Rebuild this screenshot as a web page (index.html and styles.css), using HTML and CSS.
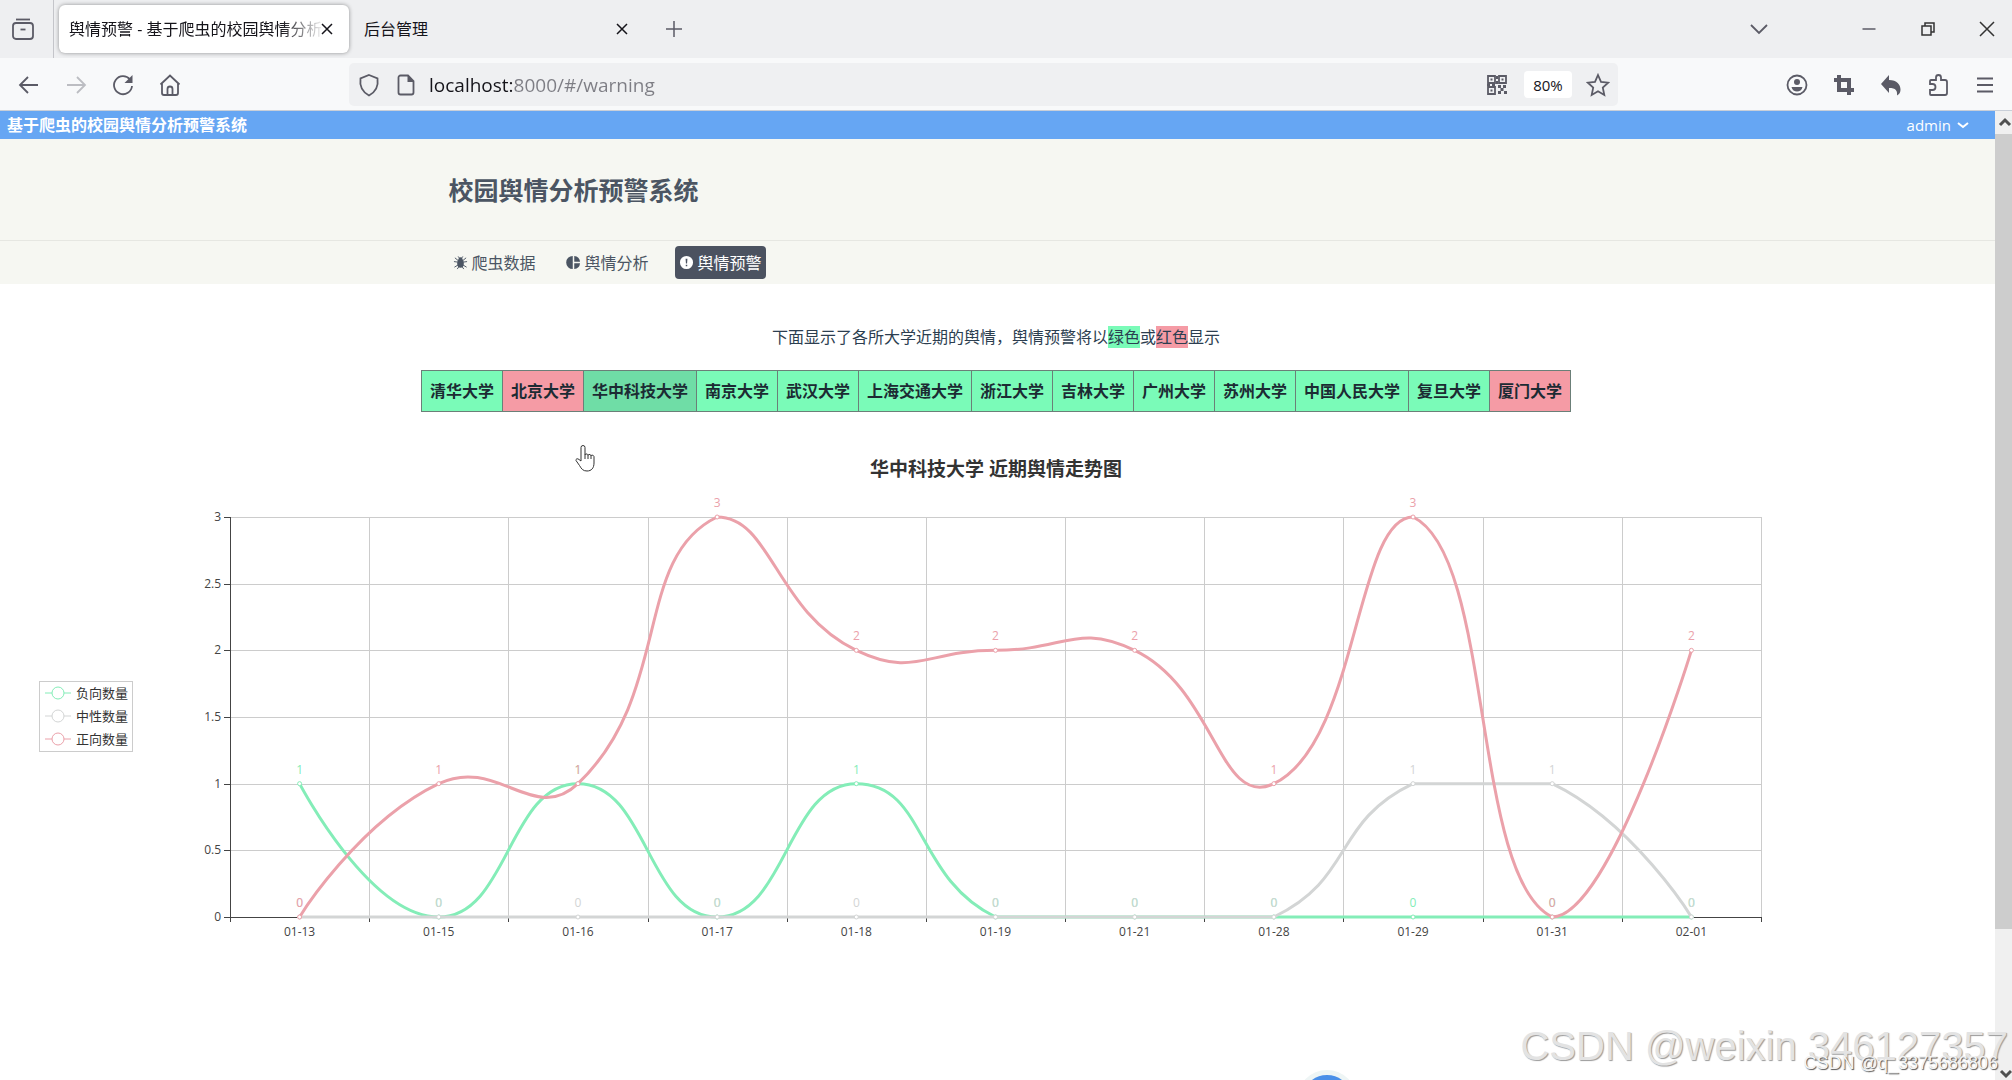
FILE: index.html
```html
<!DOCTYPE html>
<html lang="zh-CN">
<head>
    <meta charset="UTF-8">
    <meta name="viewport" content="width=device-width, initial-scale=1.0">
    <title>舆情预警 - 基于爬虫的校园舆情分析预警系统</title>
    <link rel="stylesheet" href="styles.css">
</head>
<body>
    <!-- Tab strip -->
    <div class="tabstrip">
        <button class="icon-btn history" aria-label="History">
            <svg viewBox="0 0 24 24"><path d="M5 2.500h14"/><rect x="2" y="6" width="20" height="16" rx="3"/><path d="M9.500 12.500h5"/></svg>
        </button>
        <div class="tab active">
            <a class="tab-title" href="#/warning">舆情预警 - 基于爬虫的校园舆情分析</a>
            <button class="close" aria-label="Close tab"><svg viewBox="0 0 12 12"><path d="M1 1l10 10M11 1L1 11"/></svg></button>
        </div>
        <div class="tab">
            <a class="tab-title" href="#/admin">后台管理</a>
            <button class="close" aria-label="Close tab"><svg viewBox="0 0 12 12"><path d="M1 1l10 10M11 1L1 11"/></svg></button>
        </div>
        <button class="icon-btn new-tab" aria-label="New tab"><svg viewBox="0 0 24 24"><path d="M12 4v16M4 12h16"/></svg></button>
        <div class="window-controls">
            <button class="icon-btn all-tabs" aria-label="All tabs"><svg viewBox="0 0 24 24"><path d="M4 8l8 8 8-8"/></svg></button>
            <button class="icon-btn" aria-label="Minimize"><svg viewBox="0 0 24 24"><path d="M5.500 12h13"/></svg></button>
            <button class="icon-btn dark" aria-label="Restore"><svg viewBox="0 0 24 24"><rect x="6" y="9" width="9" height="9"/><path d="M9 9V6h9v9h-3"/></svg></button>
            <button class="icon-btn dark" aria-label="Close"><svg viewBox="0 0 24 24"><path d="M5 5l14 14M19 5L5 19"/></svg></button>
        </div>
    </div>

    <!-- Toolbar -->
    <div class="toolbar">
        <button class="icon-btn" aria-label="Back"><svg viewBox="0 0 24 24"><path d="M21 12H3M11 4l-8 8 8 8"/></svg></button>
        <button class="icon-btn disabled" aria-label="Forward"><svg viewBox="0 0 24 24"><path d="M3 12h18M13 4l8 8-8 8"/></svg></button>
        <button class="icon-btn" aria-label="Reload"><svg viewBox="0 0 24 24"><path d="M19 6.500a9 9 0 1 0 2 6.500"/><path class="solid" d="M21.500 2v8h-8z"/></svg></button>
        <button class="icon-btn" aria-label="Home"><svg viewBox="0 0 24 24"><path d="M2.500 11.500L12 2.500l9.500 9M4 10v10a2 2 0 0 0 2 2h12a2 2 0 0 0 2-2V10M9.500 22v-6a2.500 2.500 0 0 1 5 0v6"/></svg></button>
        <div class="urlbar">
            <svg class="icon" viewBox="0 0 24 24"><path d="M12 2l8.500 3.500c1 7-2 13.500-8.500 17C5.500 19 2.500 12.500 3.500 5.500z"/></svg>
            <svg class="icon doc" viewBox="0 0 24 24"><path d="M14 2.500H6.500a2 2 0 0 0-2 2v15a2 2 0 0 0 2 2h11a2 2 0 0 0 2-2V8z"/><path class="solid" d="M13.500 2v7H20z"/></svg>
            <input class="url" type="text" aria-label="Address" value="localhost:8000/#/warning">
            <svg class="icon" viewBox="0 0 24 24"><path d="M3 3h7v7H3zM14 3h7v7h-7zM3 14h7v7H3z"/><path class="solid" d="M5.500 5.500h2v2h-2zM16.500 5.500h2v2h-2zM5.500 16.500h2v2h-2zM11 3h2v3h-2zM11 8h2v3h-2zM2 11h3v2H2zM7 11h3v2H7zM13 12h3v3h-3zM18 12h3v3h-3zM15.500 15h3v3h-3zM13 18h3v3h-3zM19 18h3v3h-3z"/></svg>
            <button class="zoom-level">80%</button>
            <button class="icon-btn" aria-label="Bookmark"><svg viewBox="0 0 24 24"><path d="M12 2l3 6.800 7.200.8-5.400 5 1.500 7.400L12 18.300 5.700 22l1.500-7.400-5.400-5 7.200-.8z"/></svg></button>
        </div>
        <button class="icon-btn" aria-label="Account"><svg viewBox="0 0 24 24"><circle cx="12" cy="12" r="9.500"/><circle class="solid" cx="12" cy="9" r="3"/><path class="solid" d="M6.500 14h11c-.5 3-3 4.500-5.500 4.500S7 17 6.500 14z"/></svg></button>
        <button class="icon-btn crop" aria-label="Screenshot"><svg viewBox="0 0 24 24"><path d="M7 2v15h15M2 7h15v15"/></svg></button>
        <button class="icon-btn" aria-label="Undo"><svg viewBox="0 0 24 24"><path class="solid" d="M10 2v5c8 0 11.500 5 11.500 9.500 0 2.500-.8 4.500-3.500 6 .5-5-1-7.500-8-7.500v5L2 11z"/></svg></button>
        <button class="icon-btn" aria-label="Extensions"><svg viewBox="0 0 24 24"><path d="M4 11V8a1 1 0 0 1 1-1h5V4.500a2.500 2.500 0 0 1 5 0V7h4a2 2 0 0 1 2 2v11a2 2 0 0 1-2 2H5a1 1 0 0 1-1-1v-4h2.500a2.500 2.500 0 0 0 0-6z"/></svg></button>
        <button class="icon-btn" aria-label="Menu"><svg viewBox="0 0 24 24"><path d="M4 5.500h16M4 12h16M4 18.500h16"/></svg></button>
    </div>

    <div class="viewport">
        <div class="page">
            <div class="topbar">
                <span class="brand">基于爬虫的校园舆情分析预警系统</span>
                <button class="user">admin <svg viewBox="0 0 12 12"><path d="M1 4l5 4 5-4"/></svg></button>
            </div>
            <header class="header">
                <div class="inner">
                    <h1>校园舆情分析预警系统</h1>
                </div>
                <nav class="nav">
                    <div class="inner">
                        <a href="#/spider">
                            <svg viewBox="0 0 16 16"><path class="leg" d="M8 8L1 7M8 8L2 3M8 8l6-5M8 8l7-1M8 9l-6.500 4M8 9l6.500 4M8 10l-3.500 5M8 10l3.500 5M5.500 1.500L8 5l2.500-3.500"/><ellipse cx="8" cy="9" rx="3.500" ry="4.500"/><circle cx="8" cy="4.500" r="2.200"/></svg>
                            爬虫数据
                        </a>
                        <a href="#/analysis">
                            <svg viewBox="0 0 16 16"><path d="M7.200 1v14A7 7 0 0 1 7.200 1zM8.800 1a7 7 0 0 1 6.200 6.200H8.800zM8.800 8.800H15A7 7 0 0 1 8.800 15z"/></svg>
                            舆情分析
                        </a>
                        <a class="current" href="#/warning">
                            <svg viewBox="0 0 16 16"><path fill-rule="evenodd" d="M8 1a7 7 0 1 0 0 14A7 7 0 0 0 8 1zM7 4h2l-.4 5H7.400zM7.200 10.500h1.600V12H7.200z"/></svg>
                            舆情预警
                        </a>
                    </div>
                </nav>
            </header>

            <main class="main">
                <p class="tip">下面显示了各所大学近期的舆情，舆情预警将以<span class="green">绿色</span>或<span class="red">红色</span>显示</p>
                <table class="schools">
                    <tr>
                        <th class="green">清华大学</th>
                        <th class="red">北京大学</th>
                        <th class="green selected">华中科技大学</th>
                        <th class="green">南京大学</th>
                        <th class="green">武汉大学</th>
                        <th class="green">上海交通大学</th>
                        <th class="green">浙江大学</th>
                        <th class="green">吉林大学</th>
                        <th class="green">广州大学</th>
                        <th class="green">苏州大学</th>
                        <th class="green">中国人民大学</th>
                        <th class="green">复旦大学</th>
                        <th class="red">厦门大学</th>
                    </tr>
                </table>
                <h2 class="chart-title">华中科技大学 近期舆情走势图</h2>
                <svg class="chart" id="chart"></svg>
            </main>
            <button class="float-btn" aria-label="Back to top"></button>
        </div>
        <div class="scrollbar">
            <svg viewBox="0 0 17 23"><path d="M5 14l5-5 5 5"/></svg>
            <div class="thumb"></div>
            <svg viewBox="0 0 17 23"><path d="M6 14l5 5 5-5"/></svg>
        </div>
    </div>

    <svg class="cursor" viewBox="0 0 20 28"><path d="M6 17V3.500a2 2 0 0 1 4 0V11c0-1.500 3-1.500 3 .5 0-1.500 3-1.500 3 .5 0-1.500 3-1 3 .8V19c0 5-2.500 8-7 8-4 0-5.500-2-7.500-5.500L1 16.500c-.5-1.500 1.500-2.500 3-1z"/><path d="M10 11v4M13 11.500V15M16 12v3"/></svg>
    <div class="mark mark-large">CSDN @weixin 346127357</div>
    <div class="mark mark-small">CSDN @q_3375686806</div>

    <script src="chart.js"></script>
</body>
</html>
```
FILE: styles.css
```css
* {
    box-sizing: border-box;
}
body {
    display: flex;
    flex-direction: column;
    height: 100vh;
    margin: 0;
    overflow: hidden;
    position: relative;
    font-family: "Open Sans", "Noto Sans CJK SC", sans-serif;
    font-size: 16px;
    line-height: 20px;
    color: #2c3e50;
    background-color: #fff;
}
button, input {
    font: inherit;
    color: inherit;
    border: none;
    background: none;
    padding: 0;
}
a {
    color: inherit;
    text-decoration: none;
}
svg {
    display: block;
    fill: none;
    stroke: currentColor;
}
.icon-btn, .icon {
    flex: none;
    width: 24px;
    height: 24px;
    color: #5b5b66;
    stroke-width: 1.8;
}
.icon-btn svg {
    width: 24px;
    height: 24px;
}
.solid {
    fill: currentColor;
    stroke: none;
}
.disabled {
    color: #bcbdc2;
}
.dark {
    color: #333;
}

/* tab strip */
.tabstrip {
    display: flex;
    align-items: center;
    height: 58px;
    flex: none;
    background-color: #eeeff1;
    color: #15141a;
}
.history {
    width: 54px;
    height: 58px;
    padding-left: 11px;
    border-right: 1px solid #c4c5ca;
}
.tab {
    display: flex;
    align-items: center;
    width: 290px;
    height: 48px;
    margin-left: 5px;
    padding: 0 14px 0 10px;
    border-radius: 6px;
}
.tab.active {
    background-color: #fff;
    box-shadow: 0 0 4px rgba(0, 0, 0, 0.4);
}
.tab-title {
    flex: 1;
    overflow: hidden;
    white-space: nowrap;
}
.active .tab-title {
    -webkit-mask-image: linear-gradient(to right, #000 212px, transparent 256px);
    mask-image: linear-gradient(to right, #000 212px, transparent 256px);
}
.close {
    width: 14px;
    height: 14px;
    stroke-width: 1.5;
}
.close svg {
    width: 12px;
    height: 12px;
}
.new-tab {
    margin-left: 18px;
    stroke-width: 1.5;
}
.window-controls {
    display: flex;
    gap: 35px;
    margin-left: auto;
    padding-right: 13px;
}
.window-controls .icon-btn {
    stroke-width: 1.5;
}
.window-controls .all-tabs {
    margin-right: 51px;
    stroke-width: 1.8;
}

/* toolbar */
.toolbar {
    display: flex;
    align-items: center;
    gap: 23px;
    height: 53px;
    flex: none;
    padding: 1px 15px 0 17px;
    background-color: #f8f9fa;
    border-bottom: 1px solid #c9cfd8;
}
.urlbar {
    display: flex;
    flex: 1;
    align-items: center;
    height: 43px;
    margin: 0 144px;
    padding: 0 8px;
    border-radius: 5px;
    background-color: #eff0f2;
}
.doc {
    margin: 0 11px 0 13px;
}
.url {
    flex: 1;
    min-width: 0;
    height: 32px;
    font-size: 19px;
    color: transparent;
    background-image: linear-gradient(to right, #15141a 84px, #7d7d84 84px);
    -webkit-background-clip: text;
    background-clip: text;
}
.zoom-level {
    width: 48px;
    height: 27px;
    margin: 0 14px 0 15px;
    border-radius: 4px;
    background-color: #fff;
    font-size: 15px;
    color: #15141a;
}
.crop {
    stroke-width: 4;
}

/* page */
.viewport {
    display: flex;
    flex: 1;
    min-height: 0;
}
.page {
    flex: 1;
    min-width: 0;
    overflow: hidden;
    position: relative;
}
.topbar {
    display: flex;
    align-items: center;
    justify-content: space-between;
    height: 28px;
    padding: 0 26px 0 7px;
    background-color: #66a6f3;
    color: #fff;
}
.brand {
    font-weight: bold;
}
.user {
    display: flex;
    align-items: center;
    gap: 6px;
    font-size: 15px;
}
.user svg {
    width: 12px;
    height: 12px;
    stroke-width: 2;
}
.header {
    background-color: #f6f7f2;
    color: #4b5563;
}
.inner {
    display: flex;
    max-width: 1098px;
    margin: 0 auto;
}
h1 {
    margin: 0;
    padding: 36px 0 35px;
    font-size: 25px;
    line-height: 30px;
}
.nav {
    border-top: 1px solid #e6e7e2;
    padding: 5px 0;
}
.nav .inner {
    gap: 22px;
}
.nav a {
    display: flex;
    align-items: center;
    gap: 4px;
    height: 33px;
    padding: 0 4px;
    border-radius: 4px;
}
.nav svg {
    width: 15px;
    height: 15px;
    fill: currentColor;
    stroke: none;
}
.nav .leg {
    fill: none;
    stroke: currentColor;
}
.nav .current {
    background-color: #4b5260;
    color: #fff;
}
.main {
    display: flex;
    flex-direction: column;
    align-items: center;
    padding: 43px 3px 0 0;
}
.tip {
    margin: 0;
}
.green {
    background-color: #7afbb8;
}
.red {
    background-color: #f59ba5;
}
.schools {
    margin-top: 23px;
    border-collapse: collapse;
    color: #1c2b33;
}
.schools th {
    height: 41px;
    padding: 0 8px;
    border: 1px solid #6b7f78;
    white-space: nowrap;
    cursor: pointer;
}
.schools .selected {
    background-color: #6fdda6;
}
.chart-title {
    margin: 44px 0 0;
    font-size: 19px;
    line-height: 26px;
    color: #333;
}
.chart {
    width: 100%;
    height: 480px;
    font-size: 12px;
    stroke: none;
}
.float-btn {
    position: absolute;
    left: 65%;
    bottom: -50px;
    width: 60px;
    height: 60px;
    border: 5px solid #eef5f5;
    border-radius: 50%;
    background-color: #4a8fe8;
}

/* chart parts */
.grid-line {
    stroke: #ccc;
}
.axis {
    stroke: #444;
}
.axis-label {
    fill: #444;
}
.series {
    fill: none;
    stroke-width: 3;
}
.dot {
    fill: #fff;
    stroke-width: 1;
}
.legend-box {
    fill: #fff;
    stroke: #ccc;
}
.legend-mark {
    fill: #fff;
    stroke-width: 1;
}
.legend-text {
    fill: #333;
    font-size: 13px;
}

/* scrollbar */
.scrollbar {
    display: flex;
    flex-direction: column;
    width: 17px;
    background-color: #f0f0f0;
    color: #505050;
    stroke-width: 3;
}
.scrollbar svg {
    height: 23px;
}
.thumb {
    height: 795px;
    background-color: #cdcdcd;
    margin-bottom: auto;
}

/* floating over everything */
.cursor {
    position: absolute;
    left: 575px;
    top: 444px;
    width: 20px;
    height: 28px;
    fill: #fff;
    stroke: #333;
}
.mark {
    position: absolute;
    font-family: "Liberation Sans", sans-serif;
    white-space: nowrap;
    pointer-events: none;
}
.mark-large {
    right: 4px;
    bottom: 12px;
    font-size: 40px;
    line-height: 44px;
    color: #e3e3e3;
    text-shadow: 1px 1px 1px #999;
}
.mark-small {
    right: 14px;
    bottom: 7px;
    font-size: 18px;
    line-height: 20px;
    color: #f4f4f4;
    text-shadow: 1px 1px 1px #555;
}
```
FILE: chart.js
```js
const days = ['01-13', '01-15', '01-16', '01-17', '01-18', '01-19', '01-21', '01-28', '01-29', '01-31', '02-01'];
const series = [
    { name: '负向数量', color: '#84edb8', data: [1, 0, 1, 0, 1, 0, 0, 0, 0, 0, 0] },
    { name: '中性数量', color: '#d3d5d5', data: [0, 0, 0, 0, 0, 0, 0, 0, 1, 1, 0] },
    { name: '正向数量', color: '#eba1aa', data: [0, 1, 1, 3, 2, 2, 2, 1, 3, 0, 2] }
];

const chart = document.getElementById('chart');
const grid = { left: 230, right: 231, top: 35, height: 400 };
const maxValue = 3;

function add(tag, attrs, text) {
    const el = document.createElementNS('http://www.w3.org/2000/svg', tag);
    for (const key in attrs) {
        el.setAttribute(key, attrs[key]);
    }
    if (text !== undefined) {
        el.textContent = text;
    }
    chart.appendChild(el);
}

function line(x1, y1, x2, y2, cls) {
    add('line', { x1, y1, x2, y2, class: cls });
}

// Crisp position for 1px lines
function snap(v) {
    return Math.round(v) + 0.5;
}

// Smooth curve, control points kept inside the bounding box of the series
function smoothPath(points) {
    const ys = points.map(p => p[1]);
    const minY = Math.min(...ys);
    const maxY = Math.max(...ys);
    const clamp = y => Math.max(minY, Math.min(maxY, y));
    let d = `M${points[0][0]} ${points[0][1]}`;
    let cp0 = points[0];
    for (let i = 1; i < points.length; i++) {
        const prev = points[i - 1];
        const p = points[i];
        const next = points[i + 1];
        let cp1 = p;
        let nextCp = p;
        if (next) {
            const vx = next[0] - prev[0];
            const vy = next[1] - prev[1];
            const lenPrev = Math.hypot(p[0] - prev[0], p[1] - prev[1]);
            const lenNext = Math.hypot(next[0] - p[0], next[1] - p[1]);
            const ratio = lenNext / (lenNext + lenPrev);
            cp1 = [p[0] - vx * 0.5 * (1 - ratio), p[1] - vy * 0.5 * (1 - ratio)];
            nextCp = [p[0] + vx * 0.5 * ratio, p[1] + vy * 0.5 * ratio];
        }
        d += `C${cp0[0]} ${clamp(cp0[1])} ${cp1[0]} ${clamp(cp1[1])} ${p[0]} ${p[1]}`;
        cp0 = nextCp;
    }
    return d;
}

function drawLegend() {
    const top = grid.top + 164;
    add('rect', { x: 39.5, y: top + 0.5, width: 93, height: 70, class: 'legend-box' });
    series.forEach((s, i) => {
        const y = top + 12 + i * 23;
        add('line', { x1: 45, y1: y, x2: 71, y2: y, stroke: s.color });
        add('circle', { cx: 58, cy: y, r: 6, stroke: s.color, class: 'legend-mark' });
        add('text', { x: 76, y: y + 5, class: 'legend-text' }, s.name);
    });
}

function draw() {
    chart.innerHTML = '';
    const right = chart.clientWidth - grid.right;
    const bottom = grid.top + grid.height;
    const step = (right - grid.left) / days.length;
    const x = i => grid.left + step * (i + 0.5);
    const y = v => bottom - v / maxValue * grid.height;

    for (let v = 0; v <= maxValue; v += 0.5) {
        if (v > 0) {
            line(grid.left, snap(y(v)), right, snap(y(v)), 'grid-line');
        }
        line(grid.left - 6, snap(y(v)), grid.left, snap(y(v)), 'axis');
        add('text', { x: grid.left - 9, y: y(v) + 4, 'text-anchor': 'end', class: 'axis-label' }, v);
    }
    for (let i = 0; i <= days.length; i++) {
        const tx = snap(grid.left + step * i);
        if (i > 0) {
            line(tx, grid.top, tx, bottom, 'grid-line');
        }
        line(tx, bottom, tx, bottom + 5, 'axis');
    }
    line(grid.left, bottom + 0.5, right, bottom + 0.5, 'axis');
    line(grid.left + 0.5, grid.top, grid.left + 0.5, bottom, 'axis');
    days.forEach((day, i) => {
        add('text', { x: x(i), y: bottom + 19, 'text-anchor': 'middle', class: 'axis-label' }, day);
    });

    series.forEach(s => {
        const points = s.data.map((v, i) => [x(i), y(v)]);
        add('path', { d: smoothPath(points), stroke: s.color, class: 'series' });
        points.forEach((p, i) => {
            add('circle', { cx: p[0], cy: p[1], r: 2, stroke: s.color, class: 'dot' });
            add('text', { x: p[0], y: p[1] - 10, 'text-anchor': 'middle', fill: s.color }, s.data[i]);
        });
    });
    drawLegend();
}

draw();
window.addEventListener('resize', draw);
```
